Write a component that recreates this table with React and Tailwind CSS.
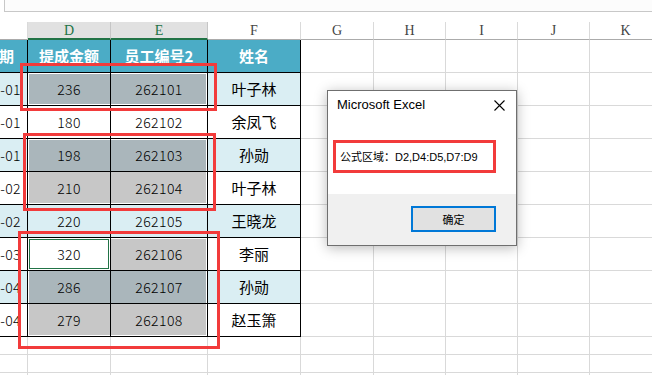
import React from 'react';

// column widths incl. right border: A(cut), D, E, F, G, H, I, J, K
const W = ['w-[28px]', 'w-[83px]', 'w-[97px]', 'w-[93px]', 'w-[73px]', 'w-[72px]', 'w-[72px]', 'w-[72px]', 'w-[72px]'];
const LETTERS = ['', 'D', 'E', 'F', 'G', 'H', 'I', 'J', 'K'];

const BLUE = 'bg-[#daeef3]';
const SEL_BLUE = 'bg-[#aab6bb]';
const SEL_WHITE = 'bg-[#c7c7c7]';

// d/e: selection shading for D and E in that row
const ROWS = [
  { date: '2020-01-01', amt: '236', id: '262101', name: '叶子林', blue: true,
    d: `${SEL_BLUE} shadow-[inset_1px_0_0_#fff,inset_0_1px_0_#fff,inset_0_-1px_0_#fff]`,
    e: `${SEL_BLUE} shadow-[inset_-1px_0_0_#fff,inset_0_1px_0_#fff,inset_0_-1px_0_#fff]` },
  { date: '2020-02-01', amt: '180', id: '262102', name: '余凤飞', blue: false },
  { date: '2020-03-01', amt: '198', id: '262103', name: '孙勋', blue: true,
    d: `${SEL_BLUE} shadow-[inset_1px_0_0_#fff,inset_0_1px_0_#fff]`,
    e: `${SEL_BLUE} shadow-[inset_-1px_0_0_#fff,inset_0_1px_0_#fff]` },
  { date: '2020-01-02', amt: '210', id: '262104', name: '叶子林', blue: false,
    d: `${SEL_WHITE} shadow-[inset_1px_0_0_#fff,inset_0_-1px_0_#fff]`,
    e: `${SEL_WHITE} shadow-[inset_-1px_0_0_#fff,inset_0_-1px_0_#fff]` },
  { date: '2020-02-02', amt: '220', id: '262105', name: '王晓龙', blue: true },
  { date: '2020-01-03', amt: '320', id: '262106', name: '李丽', blue: false,
    d: 'bg-white shadow-[inset_0_0_0_1px_#fff,inset_0_0_0_2px_#217346]',
    e: `${SEL_WHITE} shadow-[inset_-1px_0_0_#fff,inset_0_1px_0_#fff]` },
  { date: '2020-01-04', amt: '286', id: '262107', name: '孙勋', blue: true,
    d: `${SEL_BLUE} shadow-[inset_1px_0_0_#fff]`,
    e: `${SEL_BLUE} shadow-[inset_-1px_0_0_#fff]` },
  { date: '2020-02-04', amt: '279', id: '262108', name: '赵玉箫', blue: false,
    d: `${SEL_WHITE} shadow-[inset_1px_0_0_#fff,inset_0_-1px_0_#fff]`,
    e: `${SEL_WHITE} shadow-[inset_-1px_0_0_#fff,inset_0_-1px_0_#fff]` },
];

const num = "font-['Noto_Sans_CJK_SC',sans-serif] font-light text-[14px] tracking-[0.4px]";
const letter = "font-['Liberation_Serif',serif] text-[14px]";
const cjk = "font-['Noto_Sans_CJK_SC',sans-serif]";

function GridTail({ h }) {
  return W.slice(4).map((w, i) => (
    <div key={i} className={`${w} ${h} shrink-0 border-r border-b border-[#d9d9d9]`} />
  ));
}

export default function App() {
  return (
    <div className="relative w-[652px] h-[375px] overflow-hidden bg-white">
      {/* formula bar edge */}
      <div className="h-[22px]">
        <div className="ml-[4px] h-[12px] border-l border-b border-[#c8c8c8] bg-[#fcfcfc]" />
      </div>

      {/* column letters */}
      <div className="flex h-[18px]">
        {LETTERS.map((l, i) => {
          const sel = i === 1 || i === 2;
          return (
            <div
              key={i}
              className={`${W[i]} shrink-0 flex items-center justify-center ${letter} border-r ${
                sel
                  ? 'bg-[#e1e1e1] text-[#217346] border-b-2 border-b-[#217346] border-r-[#c6c6c6]'
                  : 'bg-white text-[#444] border-b border-b-[#ababab] border-r-[#dadada]'
              }`}
            >
              {l}
            </div>
          );
        })}
      </div>

      {/* header row */}
      <div className="flex h-[33px]">
        <div className={`${W[0]} shrink-0 flex items-center justify-end overflow-hidden whitespace-nowrap pr-[13px] bg-[#4bacc6] text-white font-bold text-[15px] ${cjk} border-r border-b border-black`}>
          入职日期
        </div>
        {['提成金额', '员工编号2', '姓名'].map((t, i) => (
          <div key={t} className={`${W[i + 1]} shrink-0 flex items-center justify-center bg-[#4bacc6] text-white font-bold text-[15px] ${cjk} border-r border-b border-black`}>
            {t}
          </div>
        ))}
        <GridTail h="h-[33px]" />
      </div>

      {/* data rows */}
      {ROWS.map((r) => {
        const base = r.blue ? BLUE : 'bg-white';
        return (
          <div key={r.id} className="flex h-[33px]">
            <div className={`${W[0]} shrink-0 flex items-center justify-end overflow-hidden whitespace-nowrap pr-[6px] ${base} ${num} text-black border-r border-b border-black`}>
              {r.date}
            </div>
            <div className={`${W[1]} shrink-0 flex items-center justify-center ${r.d || base} ${num} text-black border-r border-b border-black`}>
              {r.amt}
            </div>
            <div className={`${W[2]} shrink-0 flex items-center justify-center ${r.e || base} ${num} text-black border-r border-b border-black`}>
              {r.id}
            </div>
            <div className={`${W[3]} shrink-0 flex items-center justify-center ${base} text-[15px] ${cjk} text-black border-r border-b border-black`}>
              {r.name}
            </div>
            <GridTail h="h-[33px]" />
          </div>
        );
      })}

      {/* empty rows */}
      {[0, 1, 2].map((k) => (
        <div key={k} className="flex h-[18px]">
          {W.map((w, i) => (
            <div key={i} className={`${w} shrink-0 border-r border-b border-[#d9d9d9]`} />
          ))}
        </div>
      ))}

      {/* red annotation boxes on the sheet */}
      <div className="absolute left-[20px] top-[63px] w-[197px] h-[48px] border-[3px] border-[#f23b3b]" />
      <div className="absolute left-[23px] top-[133px] w-[193px] h-[78px] border-[3px] border-[#f23b3b]" />
      <div className="absolute left-[18px] top-[231px] w-[202px] h-[118px] border-[3px] border-[#f23b3b]" />

      {/* message box */}
      <div className="absolute left-[327px] top-[90px] w-[190px] h-[156px] flex flex-col bg-white border border-[#6f6f6f] shadow-[0_2px_12px_rgba(0,0,0,0.28)]">
        <div className="h-[28px] shrink-0 flex items-center justify-between pl-[9px] pr-[11px]">
          <span className="text-[13px] text-black font-['Liberation_Sans',sans-serif]">Microsoft Excel</span>
          <svg width="11" height="11" viewBox="0 0 11 11" className="text-black">
            <path d="M0.5 0.5L10.5 10.5M10.5 0.5L0.5 10.5" stroke="currentColor" strokeWidth="1.1" />
          </svg>
        </div>
        <div className="flex-1 pl-[12px] pt-[30px]">
          <p className="text-[11px] leading-[16px] text-black font-['Liberation_Sans','Noto_Sans_CJK_SC',sans-serif]">
            公式区域：D2,D4:D5,D7:D9
          </p>
        </div>
        <div className="h-[51px] shrink-0 bg-[#f0f0f0] flex justify-end items-start pt-[12px] pr-[20px]">
          <button className={`w-[85px] h-[26px] border-2 border-[#0078d7] bg-[#e1e1e1] text-[11px] text-black ${cjk}`}>
            确定
          </button>
        </div>
      </div>

      <div className="absolute left-[333px] top-[140px] w-[163px] h-[33px] border-[3px] border-[#f23b3b]" />
    </div>
  );
}
